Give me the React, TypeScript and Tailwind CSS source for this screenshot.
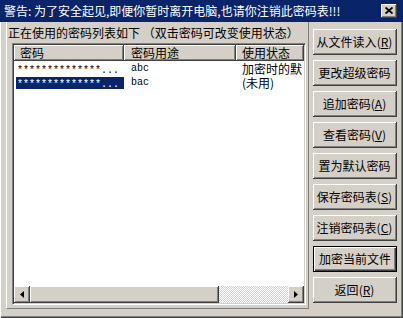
import React from "react";

const buttons = [
  { label: "从文件读入", key: "R" },
  { label: "更改超级密码" },
  { label: "追加密码", key: "A" },
  { label: "查看密码", key: "V" },
  { label: "置为默认密码" },
  { label: "保存密码表", key: "S" },
  { label: "注销密码表", key: "C" },
  { label: "加密当前文件", isDefault: true },
  { label: "返回", key: "R" },
];

const rows = [
  { pw: "**************...", use: "abc", state: "加密时的默", selected: false },
  { pw: "**************...", use: "bac", state: "(未用)", selected: true },
];

const raised =
  "border-r border-b border-r-[#404040] border-b-[#404040] shadow-[inset_1px_1px_0_#fff,inset_-1px_-1px_0_#808080]";

function Arrow({ dir }: { dir: "left" | "right" }) {
  return (
    <svg width="4" height="7" viewBox="0 0 4 7">
      {dir === "left" ? <path d="M4 0 L0 3.5 L4 7 Z" fill="#000" /> : <path d="M0 0 L4 3.5 L0 7 Z" fill="#000" />}
    </svg>
  );
}

export default function App() {
  return (
    <div className="w-[403px] h-[318px] bg-[#d4d0c8] overflow-hidden flex flex-col font-['Noto_Sans_CJK_SC',sans-serif] text-[12px] text-black shadow-[inset_1px_0_0_#fff,inset_-1px_-1px_0_#404040,inset_-2px_-2px_0_#808080]">
      {/* title bar */}
      <div className="h-[22px] bg-[#0a246a] flex items-center shrink-0">
        <span className="pl-[4px] text-white leading-none whitespace-nowrap">
          警告: 为了安全起见,即便你暂时离开电脑,也请你注销此密码表!!!
        </span>
        <div className={`ml-auto mr-[6px] w-[16px] h-[14px] bg-[#d4d0c8] flex items-center justify-center ${raised}`}>
          <svg width="8" height="7" viewBox="0 0 8 7">
            <path d="M0.5 0.5 L7.5 6.5 M7.5 0.5 L0.5 6.5" stroke="#000" strokeWidth="1.8" />
          </svg>
        </div>
      </div>

      <div className="flex pl-[6px] flex-1">
        {/* left panel */}
        <div className="w-[303px] h-[287px] border-l border-l-white border-r border-r-[#808080] border-b border-b-[#808080] pl-[5px] flex flex-col">
          <div className="h-[21px] leading-[21px] -ml-[4px] whitespace-nowrap">
            正在使用的密码列表如下 （双击密码可改变使用状态）
          </div>
          <div className="w-[294px] h-[262px] bg-white border-t border-l border-t-[#808080] border-l-[#808080] border-b border-r border-b-white border-r-white shadow-[inset_1px_1px_0_#404040,inset_-1px_-1px_0_#d4d0c8] p-[1px] flex flex-col">
            {/* header */}
            <div className="flex h-[16px] bg-[#d4d0c8] leading-[15px] shrink-0">
              <div className={`w-[110px] pl-[6px] ${raised}`}>密码</div>
              <div className={`w-[112px] pl-[7px] ${raised}`}>密码用途</div>
              <div className={`flex-1 pl-[6px] ${raised}`}>使用状态</div>
            </div>
            {/* rows */}
            <div className="flex-1 pt-[1px] overflow-hidden">
              {rows.map((r, i) => (
                <div key={i} className="flex h-[14px] leading-[14px] items-start">
                  <div className="w-[110px] pl-[2px] pt-[1px]">
                    <div
                      className={`h-[12px] pl-[1px] pt-[2px] font-['Liberation_Mono',monospace] text-[10px] leading-[12px] ${
                        r.selected ? "bg-[#0a246a] text-white" : ""
                      }`}
                    >
                      {r.pw}
                    </div>
                  </div>
                  <div className="w-[112px] pl-[7px] font-['Liberation_Mono',monospace] text-[10px]">{r.use}</div>
                  <div className="flex-1 pl-[6px] whitespace-nowrap">{r.state}</div>
                </div>
              ))}
            </div>
            {/* horizontal scrollbar */}
            <div className="flex h-[17px] shrink-0 bg-[#d4d0c8]">
              <div className={`w-[16px] bg-[#d4d0c8] flex items-center justify-center ${raised}`}>
                <Arrow dir="left" />
              </div>
              <div className={`w-[189px] bg-[#d4d0c8] ${raised}`} />
              <div className="flex-1 bg-[image:repeating-conic-gradient(#ffffff_0_25%,#d4d0c8_0_50%)] bg-[length:2px_2px]" />
              <div className={`w-[16px] bg-[#d4d0c8] flex items-center justify-center ${raised}`}>
                <Arrow dir="right" />
              </div>
            </div>
          </div>
        </div>

        {/* right buttons */}
        <div className="ml-[4px] w-[84px] flex flex-col gap-[5px] pt-[7px]">
          {buttons.map((b, i) => (
            <div
              key={i}
              className={`h-[26px] flex items-center justify-center whitespace-nowrap leading-none ${
                b.isDefault
                  ? "border border-black shadow-[inset_1px_1px_0_#fff,inset_-1px_-1px_0_#404040,inset_-2px_-2px_0_#808080]"
                  : raised
              }`}
            >
              {b.label}
              {b.key && (
                <span>
                  (<span className="underline">{b.key}</span>)
                </span>
              )}
            </div>
          ))}
        </div>
      </div>
    </div>
  );
}
